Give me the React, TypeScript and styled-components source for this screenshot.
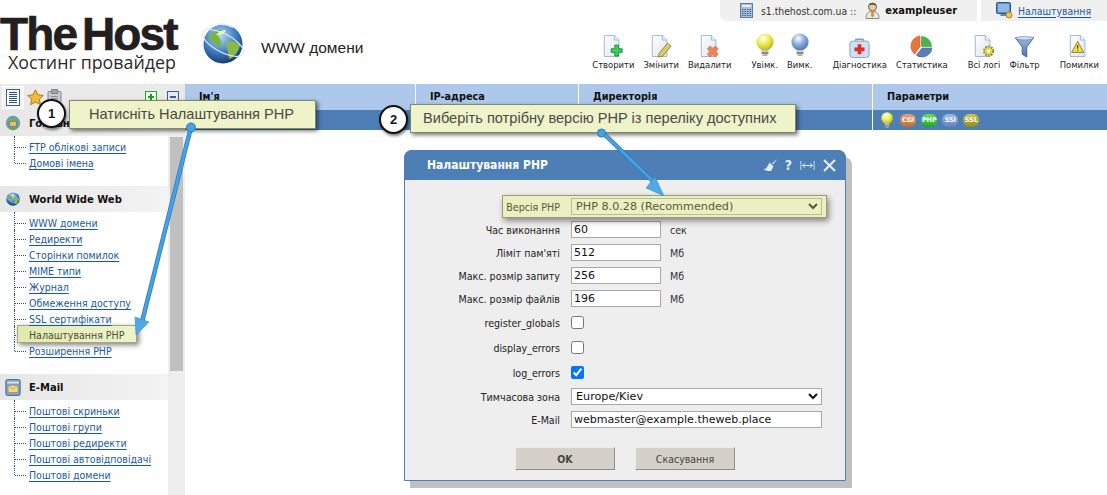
import React from "react";
import styled, { createGlobalStyle } from "styled-components";

const Global = createGlobalStyle`
  html, body { margin: 0; padding: 0; background: #fff; }
  body { font-family: "DejaVu Sans Condensed", "Noto Sans", Tahoma, sans-serif; font-size: 10.5px; color: #222; overflow: hidden; }
  * { box-sizing: border-box; }
`;

const Page = styled.div`
  position: relative;
  width: 1107px;
  height: 495px;
  overflow: hidden;
`;

const Header = styled.header`
  display: flex;
  height: 84px;
`;
const LogoBlock = styled.div`
  width: 200px;
  flex: none;
  padding-top: 11px;
`;
const LogoMain = styled.div`
  font-family: "Liberation Sans", Arial, sans-serif;
  font-weight: 700;
  font-size: 46px;
  line-height: 46px;
  letter-spacing: -1.9px;
  word-spacing: -5px;
  color: #231f20;
  -webkit-text-stroke: 0.7px #231f20;
  white-space: nowrap;
`;
const LogoSub = styled.div`
  font-family: "Open Sans", sans-serif;
  font-size: 17.8px;
  line-height: 20px;
  margin: -5px 0 0 8px;
  color: #2d2a2b;
  white-space: nowrap;
`;
const GlobeWrap = styled.div`
  width: 61px;
  flex: none;
  padding-top: 21px;
`;
const PageTitle = styled.h1`
  margin: 0;
  padding-top: 38px;
  font-family: "Liberation Sans", Arial, sans-serif;
  font-size: 15.5px;
  line-height: 20px;
  font-weight: 400;
  color: #222;
  white-space: nowrap;
`;
const HeaderRight = styled.div`
  flex: 1;
  display: flex;
  flex-direction: column;
  align-items: flex-end;
`;
const TopTabs = styled.div`
  display: flex;
  gap: 4px;
  height: 21px;
`;
const ServerTab = styled.div`
  width: 257px;
  display: flex;
  align-items: center;
  padding-left: 20px;
  background: #f0f0f0;
  border-bottom-left-radius: 6px;
  font-size: 10.3px;
  color: #333;
  white-space: nowrap;
`;
const ServerName = styled.span`
  margin-left: 8px;
`;
const UserSlot = styled.span`
  margin-left: 9px;
  display: flex;
`;
const UserName = styled.b`
  font-size: 11px;
  color: #111;
  margin-left: 5px;
`;
const SettingsTab = styled.div`
  width: 126px;
  display: flex;
  align-items: center;
  gap: 5px;
  padding-left: 15px;
  background: #f0f0f0;
`;
const TabLink = styled.a`
  color: #1a5a9c;
  text-decoration: underline;
  text-underline-offset: 2px;
  font-size: 10.4px;
`;
const Toolbar = styled.div`
  display: flex;
  gap: 20px;
  margin-top: 12px;
  padding-right: 8px;
`;
const ToolGroup = styled.div`
  display: flex;
  gap: 9px;
`;
const Tool = styled.div`
  display: flex;
  flex-direction: column;
  align-items: center;
  font-size: 9.4px;
  line-height: 12px;
  color: #222;
  white-space: nowrap;
`;
const ToolIcon = styled.div`
  height: 25px;
  margin-bottom: 1px;
  display: flex;
  align-items: flex-end;
`;

const Body = styled.div`
  display: flex;
`;
const Sidebar = styled.aside`
  width: 185px;
  flex: none;
`;
const SideTabs = styled.div`
  height: 26px;
  background: #eaeaea;
  display: flex;
  align-items: center;
  padding: 0 6px 0 2px;
`;
const ActiveTab = styled.div`
  width: 22px;
  height: 23px;
  display: flex;
  align-items: center;
  justify-content: center;
  background: #f4f4f4;
  border: 1px solid #fff;
`;
const TabIcon = styled.div`
  margin-left: 3px;
  display: flex;
`;
const Spacer = styled.div`
  flex: 1;
`;
const BoxGap = styled.span`
  width: 10px;
`;
const SideInner = styled.div`
  display: flex;
`;
const SideMenu = styled.nav`
  width: 168px;
  flex: none;
`;
const GroupHead = styled.div`
  height: 26px;
  display: flex;
  align-items: center;
  gap: 8px;
  padding-left: 5px;
  background: linear-gradient(90deg, #e6e6e6, #f3f3f3);
  font-weight: 700;
  font-size: 11.1px;
  color: #111;
`;
const LinkList = styled.ul`
  list-style: none;
  margin: 0 0 16px;
  padding: 2px 0 0 14px;
`;
const LinkItem = styled.li`
  position: relative;
  height: 16px;
  line-height: 16px;
  padding-left: 15px;
  white-space: nowrap;
  &::before {
    content: "";
    position: absolute;
    left: 0;
    top: -2px;
    bottom: 0;
    border-left: 1px dotted #33506e;
  }
  &:not(:first-child)::before { top: 0; }
  &:last-child::before { bottom: 7px; }
  &::after {
    content: "";
    position: absolute;
    left: 1px;
    top: 9px;
    width: 11px;
    border-top: 1px dotted #33506e;
  }
`;
const MenuLink = styled.a<{ $hl?: boolean }>`
  position: relative;
  z-index: 2;
  top: 1px;
  font-size: 10.5px;
  color: ${(p) => (p.$hl ? "#4d4d3c" : "#1a5a9c")};
  text-decoration: ${(p) => (p.$hl ? "none" : "underline")};
  text-underline-offset: 2px;
`;
const LinkHighlight = styled.span`
  position: absolute;
  z-index: 1;
  left: 3px;
  top: -1px;
  width: 120px;
  height: 18px;
  background: linear-gradient(90deg, #e2e9ae, #eef3cb);
  border: 1px solid #a3a87f;
  box-shadow: 2px 2px 5px rgba(0, 0, 0, 0.5);
`;
const Scroll = styled.div`
  width: 17px;
  flex: none;
  height: 385px;
  background: #eeeeee;
  padding: 27px 2px 0;
`;
const Thumb = styled.div`
  height: 234px;
  width: 13px;
  background: #c0c0c0;
`;

const Main = styled.main`
  flex: 1;
`;
const TableHead = styled.div`
  display: grid;
  grid-template-columns: 231px 163px 294px 1fr;
  height: 26px;
  background: #adc8ea;
`;
const HeadCell = styled.div`
  padding-left: 14px;
  line-height: 26px;
  font-size: 10.8px;
  font-weight: 700;
  color: #111;
  border-right: 1px solid #fff;
  &:last-child { border-right: 0; }
`;
const TableRow = styled.div`
  display: grid;
  grid-template-columns: 231px 163px 294px 1fr;
  height: 20px;
  background: #4d7eb5;
`;
const RowCell = styled.div`
  border-right: 1px solid #fff;
  display: flex;
  align-items: center;
  gap: 5px;
  padding-left: 8px;
  &:last-child { border-right: 0; }
  & > svg { margin-right: 2px; }
`;
const Badge = styled.span<{ $from: string; $to: string }>`
  flex: none;
  width: 16px;
  height: 13px;
  border-radius: 6px;
  background: linear-gradient(${(p) => p.$from}, ${(p) => p.$to});
  color: #fff;
  font-family: "DejaVu Sans", sans-serif;
  font-size: 6.5px;
  font-weight: 700;
  line-height: 13px;
  text-align: center;
  letter-spacing: -0.1px;
  overflow: hidden;
`;

const Modal = styled.section`
  position: absolute;
  z-index: 5;
  left: 404px;
  top: 150px;
  width: 442px;
  height: 331px;
  background: #eeeeee;
  border: 1px solid #4d7eb5;
  border-radius: 8px 8px 0 0;
  box-shadow: 6px 7px 0 #c0c0c0;
`;
const ModalBar = styled.div`
  height: 30px;
  margin: -1px -1px 0;
  background: #4d7eb5;
  border-radius: 8px 8px 0 0;
  display: flex;
  align-items: center;
  padding: 0 10px 0 23px;
  color: #fff;
`;
const ModalTitle = styled.div`
  flex: 1;
  font-size: 12px;
  font-weight: 700;
`;
const ModalIcons = styled.div`
  display: flex;
  align-items: center;
  gap: 8px;
`;
const HelpMark = styled.span`
  font-size: 14px;
  font-weight: 700;
  color: #e8eef6;
`;
const Form = styled.form`
  display: grid;
  grid-template-columns: 155px 261px;
  column-gap: 11px;
  row-gap: 6px;
  align-items: center;
  padding-top: 18px;
`;
const Label = styled.label`
  text-align: right;
  font-size: 10.6px;
  line-height: 14px;
  color: #222;
  white-space: nowrap;
`;
const VersionLabel = styled(Label)`
  position: relative;
  z-index: 1;
  color: #5b5a2e;
`;
const Highlight = styled.div`
  position: absolute;
  left: 97px;
  top: 44px;
  width: 325px;
  height: 23px;
  background: #eaf0c4;
  border: 1px solid #9a9f72;
  box-shadow: 2px 3px 6px rgba(0, 0, 0, 0.45);
`;
const FieldRow = styled.div`
  display: flex;
  align-items: center;
  gap: 9px;
  height: 17px;
  font-size: 10.6px;
  color: #333;
`;
const CheckRow = styled.div`
  display: flex;
  align-items: center;
  height: 19px;
`;
const TextField = styled.input<{ $w: number }>`
  width: ${(p) => p.$w}px;
  height: 17px;
  padding: 0 2px;
  border: 1px solid #a8a8a8;
  background: #fff;
  font-family: "DejaVu Sans", Verdana, sans-serif;
  font-size: 11px;
  color: #111;
  outline: 0;
`;
const Picker = styled.select<{ $tint?: boolean }>`
  position: relative;
  z-index: 1;
  width: 251px;
  height: 17px;
  padding: 0;
  border: 1px solid ${(p) => (p.$tint ? "#b9be8c" : "#a8a8a8")};
  background: ${(p) => (p.$tint ? "#eaf0c4" : "#fff")};
  color: ${(p) => (p.$tint ? "#5b5a2e" : "#111")};
  font-family: "DejaVu Sans", Verdana, sans-serif;
  font-size: 11.2px;
  border-radius: 0;
  outline: 0;
`;
const Check = styled.input`
  width: 13px;
  height: 13px;
  margin: 0;
`;
const Buttons = styled.div`
  display: flex;
  gap: 20px;
  padding: 19px 0 0 110px;
`;
const Btn = styled.button<{ $primary?: boolean }>`
  width: 100px;
  height: 23px;
  background: #d4d0c8;
  border: 1px solid;
  border-color: #ecebe6 #8f8d86 #8f8d86 #ecebe6;
  font-family: "DejaVu Sans Condensed", "Noto Sans", Tahoma, sans-serif;
  font-size: 10.5px;
  font-weight: ${(p) => (p.$primary ? 700 : 400)};
  color: #444;
  padding: 0;
`;

const Callout = styled.div<{ $x: number; $y: number; $w: number; $pad: number }>`
  position: absolute;
  z-index: 8;
  left: ${(p) => p.$x}px;
  top: ${(p) => p.$y}px;
  width: ${(p) => p.$w}px;
  height: 29px;
  padding-left: ${(p) => p.$pad}px;
  background: #eef3c9;
  border: 1px solid #85896c;
  box-shadow: 2px 2px 4px rgba(0, 0, 0, 0.55);
  font-family: "Liberation Sans", Arial, sans-serif;
  font-size: 14.6px;
  line-height: 27px;
  color: #4a4a48;
  white-space: nowrap;
`;
const Step = styled.div<{ $x: number; $y: number }>`
  position: absolute;
  z-index: 9;
  left: ${(p) => p.$x}px;
  top: ${(p) => p.$y}px;
  width: 29px;
  height: 29px;
  border-radius: 50%;
  background: #fff;
  border: 2px solid #111;
  box-shadow: 1px 2px 3px rgba(0, 0, 0, 0.5);
  font-family: "Liberation Sans", Arial, sans-serif;
  font-size: 13px;
  font-weight: 700;
  line-height: 25px;
  text-align: center;
  color: #111;
`;
const ArrowLayer = styled.svg`
  position: absolute;
  z-index: 10;
  left: 0;
  top: 0;
  pointer-events: none;
`;

const Doc = ({ children }: { children?: React.ReactNode }) => (
  <svg width="22" height="24" viewBox="0 0 24 26">
    <defs>
      <linearGradient id="docg" x1="0" y1="0" x2="1" y2="1">
        <stop offset="0" stopColor="#ffffff" />
        <stop offset="1" stopColor="#dbe5f2" />
      </linearGradient>
    </defs>
    <path d="M2.5 1.5h11l5 5v18h-16z" fill="url(#docg)" stroke="#9ab2d2" />
    <path d="M13.5 1.5v5h5" fill="#eef3fa" stroke="#9ab2d2" />
    {children}
  </svg>
);

const Bulb = ({ c1, c2, size = 25 }: { c1: string; c2: string; size?: number }) => (
  <svg width={size * 0.72} height={size} viewBox="0 0 18 25">
    <defs>
      <radialGradient id={`b${c2.slice(1)}`} cx="0.4" cy="0.3" r="0.75">
        <stop offset="0" stopColor="#ffffff" />
        <stop offset="0.45" stopColor={c1} />
        <stop offset="1" stopColor={c2} />
      </radialGradient>
    </defs>
    <circle cx="9" cy="9" r="8.6" fill={`url(#b${c2.slice(1)})`} />
    <rect x="5.5" y="17" width="7" height="2" fill="#c9c9c0" />
    <rect x="5.5" y="19" width="7" height="2" fill="#8f8f88" />
    <rect x="6.5" y="21" width="5" height="2" fill="#b5b5ae" />
  </svg>
);

const ListIcon = () => (
  <svg width="14" height="17" viewBox="0 0 14 17">
    <rect x="0.5" y="0.5" width="13" height="16" fill="#fff" stroke="#3c5f8c" />
    {[3, 5, 7, 9, 11, 13].map((y) => (
      <path key={y} d={`M3 ${y + 0.5}h8`} stroke="#2c4f80" />
    ))}
  </svg>
);
const StarIcon = () => (
  <svg width="17" height="17" viewBox="0 0 17 17">
    <path d="M8.5 .8l2.4 5 5.4.7-4 3.8 1.1 5.4-4.9-2.7-4.9 2.7 1.1-5.4-4-3.8 5.4-.7z" fill="#f4b93a" stroke="#b57a16" />
  </svg>
);
const ClipIcon = () => (
  <svg width="15" height="17" viewBox="0 0 15 17">
    <rect x="1" y="2.5" width="13" height="14" rx="1" fill="#c9ccd0" stroke="#7f858c" />
    <rect x="4.5" y="0.5" width="6" height="4" fill="#9ea4aa" stroke="#7f858c" />
    {[7, 9, 11, 13].map((y) => (
      <path key={y} d={`M4 ${y + 0.5}h7`} stroke="#8b9097" />
    ))}
  </svg>
);
const BoxBtn = ({ plus }: { plus?: boolean }) => (
  <svg width="12" height="12" viewBox="0 0 12 12">
    <rect x="0.5" y="0.5" width="11" height="11" fill={plus ? "#f2fbf2" : "#e4ebf5"} stroke={plus ? "#2aa52a" : "#3c5f8c"} />
    <path d="M3 6h6" stroke={plus ? "#1f9a1f" : "#3c5f8c"} strokeWidth="2" />
    {plus && <path d="M6 3v6" stroke="#1f9a1f" strokeWidth="2" />}
  </svg>
);

const Globe = ({ size }: { size: number }) => (
  <svg width={size} height={size} viewBox="0 0 46 46">
    <defs>
      <radialGradient id="gl" cx="0.42" cy="0.3" r="0.75">
        <stop offset="0" stopColor="#b6dcf5" />
        <stop offset="0.55" stopColor="#3d7ec4" />
        <stop offset="1" stopColor="#16305f" />
      </radialGradient>
    </defs>
    <circle cx="23" cy="23" r="19.5" fill="url(#gl)" />
    <path d="M9 15c4-5 9-7 14-6 1 3-2 5-5 6 2 3 4 5 3 9-2 3-4 1-6-2-3-1-6-2-6-7z" fill="#7cb244" />
    <path d="M26 21c5-2 11 0 14 3-1 6-5 11-10 14-3-3-1-7-3-10-1-2-2-5-1-7z" fill="#8bb84a" />
    <ellipse cx="23" cy="22" rx="23" ry="9" transform="rotate(28 23 22)" fill="none" stroke="#dfe9f3" strokeWidth="1.2" />
    <path d="M6 8c6-5 16-7 27-2" fill="none" stroke="#eef4fa" strokeWidth="2" opacity=".8" />
    <path d="M16 14c3-4 7-5 10-5-1 3-4 6-10 5z" fill="#eefbd0" opacity=".85" />
  </svg>
);

const MiniGlobe = () => <Globe size={16} />;
const HomeIcon = () => (
  <svg width="16" height="16" viewBox="0 0 19 19">
    <circle cx="9.5" cy="9.5" r="8.5" fill="#5e9cc9" />
    <path d="M2 12c4 5 11 5 15 0-1 4-4 6-7.500 6S3 16 2 12z" fill="#6fa94a" />
    <path d="M2 8c2-5 12-6 15 0-4-2-11-2-15 0z" fill="#7fb255" />
    <rect x="5.500" y="7.500" width="8" height="6" fill="#e8c26e" stroke="#98742e" />
  </svg>
);
const MailIcon = () => (
  <svg width="16" height="17" viewBox="0 0 17 19">
    <rect x="0.500" y="0.500" width="16" height="18" rx="2" fill="#7ea2d0" stroke="#3c5f8c" />
    <rect x="2" y="3" width="13" height="2" fill="#dbe6f3" />
    <rect x="3" y="7" width="11" height="8" fill="#f0dc84" stroke="#a2933f" strokeWidth=".7" />
    <path d="M3 7l5.500 4.500L14 7" fill="none" stroke="#a2933f" strokeWidth=".8" />
  </svg>
);
const CalcIcon = () => (
  <svg width="13" height="15" viewBox="0 0 13 15">
    <rect x="0.500" y="0.500" width="12" height="14" fill="#a8bfdc" stroke="#5c7aa3" />
    <rect x="2" y="2" width="9" height="2" fill="#eaf0f8" />
    {[6, 8, 10, 12].map((y) => (
      <path key={y} d={`M2 ${y + 0.5}h1.500M4.500 ${y + 0.5}h1.500M7 ${y + 0.5}h1.500M9.500 ${y + 0.5}h1.500`} stroke="#3f5f8a" />
    ))}
  </svg>
);
const UserIcon = () => (
  <svg width="15" height="17" viewBox="0 0 15 17">
    <circle cx="7.500" cy="5" r="4" fill="#f0c89a" stroke="#71685c" />
    <path d="M3.500 3.500c1-3 7-3 8 0-2-1-6-1-8 0z" fill="#4d4a46" />
    <path d="M1 16.500c0-5 2-7 6.500-7s6.500 2 6.500 7z" fill="#e8e8e2" stroke="#8a8a82" />
    <path d="M6.500 9.500h2l.7 4-1.700 2-1.700-2z" fill="#d9952f" />
  </svg>
);
const MonitorIcon = () => (
  <svg width="17" height="17" viewBox="0 0 17 17">
    <rect x="0.500" y="0.500" width="14" height="11" rx="1" fill="#5b8cc4" stroke="#2f5686" />
    <rect x="2" y="2" width="11" height="8" fill="#8fb8e4" />
    <path d="M5 12h5v2H4z" fill="#6d83a0" />
    <circle cx="13" cy="13" r="3" fill="#eec643" stroke="#a88a22" />
  </svg>
);

const Gear = () => (
  <g>
    <circle cx="17" cy="18.500" r="5" fill="#e6d44c" stroke="#9a8f2a" strokeWidth="2.200" strokeDasharray="2 1.200" />
    <circle cx="17" cy="18.500" r="1.800" fill="#fff" />
  </g>
);

const tools = [
  [
    { label: "Створити", icon: <Doc><path d="M14 12h4v4h4v4h-4v4h-4v-4h-4v-4h4z" fill="#38d158" stroke="#1f8d34" /></Doc> },
    { label: "Змінити", icon: <Doc><path d="M10 21l9-11 4 3-9 11-5 1z" fill="#d9cc66" stroke="#8f8230" /></Doc> },
    { label: "Видалити", icon: <Doc><path d="M12 13l3 2.500 3-2.500 3 3-2.500 3 2.500 3-3 3-3-2.500-3 2.500-3-3 2.500-3-2.500-3z" fill="#ee8458" stroke="#c9653a" strokeWidth=".6" /></Doc> },
  ],
  [
    { label: "Увімк.", icon: <Bulb c1="#eeee55" c2="#b6ad1c" /> },
    { label: "Вимк.", icon: <Bulb c1="#8fb0e0" c2="#4a6ea8" /> },
  ],
  [
    {
      label: "Діагностика",
      icon: (
        <svg width="21" height="21" viewBox="0 0 23 23">
          <path d="M7.500 5V2.500h8V5" fill="none" stroke="#8aa0c0" strokeWidth="1.500" />
          <rect x="1" y="4.500" width="21" height="18" rx="3" fill="#cfe0f4" stroke="#7c9cc6" />
          <path d="M9.500 8h4v3.500H17v4h-3.500V19h-4v-3.500H6v-4h3.500z" fill="#e52b22" />
        </svg>
      ),
    },
    {
      label: "Статистика",
      icon: (
        <svg width="23" height="23" viewBox="0 0 24 24">
          <path d="M12 1.500A10.500 10.500 0 0 1 22.500 12H12z" fill="#49b548" stroke="#2e8a30" strokeWidth=".5" />
          <path d="M10.500 1C4 2 .5 7 1 13c.3 3 2 5.500 4 7l5.500-8z" fill="#e9743d" stroke="#b14f22" strokeWidth=".5" />
          <path d="M12.500 13.500H23c-.5 5.500-5 9.500-10.500 9.500-2.500 0-4.500-.8-6-2z" fill="#5f7fb4" stroke="#3d5a8c" strokeWidth=".5" />
        </svg>
      ),
    },
  ],
  [
    { label: "Всі логі", icon: <Doc><Gear /></Doc> },
    {
      label: "Фільтр",
      icon: (
        <svg width="21" height="22" viewBox="0 0 22 24">
          <defs>
            <linearGradient id="fn" x1="0" x2="0" y1="0" y2="1">
              <stop offset="0" stopColor="#9db9dc" />
              <stop offset="1" stopColor="#4e76a8" />
            </linearGradient>
          </defs>
          <path d="M1 2h20l-7.500 10v11l-5-3v-8z" fill="url(#fn)" stroke="#3e6596" />
          <ellipse cx="11" cy="2.500" rx="10" ry="1.800" fill="#d5e2f2" stroke="#3e6596" strokeWidth=".6" />
        </svg>
      ),
    },
  ],
  [
    { label: "Помилки", icon: <Doc><path d="M10.500 8l6.500 12H4z" fill="#f2df44" stroke="#8d7d1c" /><path d="M10.500 12v4M10.500 17.300v1.200" stroke="#333" strokeWidth="1.200" /></Doc> },
  ],
];

const Group = ({ icon, title, links, hl }: { icon: React.ReactNode; title: React.ReactNode; links: string[]; hl?: string }) => (
  <>
    <GroupHead>
      {icon}
      <span>{title}</span>
    </GroupHead>
    <LinkList>
      {links.map((l) => (
        <LinkItem key={l}>
          {l === hl && <LinkHighlight />}
          <MenuLink $hl={l === hl}>{l}</MenuLink>
        </LinkItem>
      ))}
    </LinkList>
  </>
);

const numberRows = [
  { label: "Час виконання", value: "60", unit: "сек" },
  { label: "Ліміт пам'яті", value: "512", unit: "Мб" },
  { label: "Макс. розмір запиту", value: "256", unit: "Мб" },
  { label: "Макс. розмір файлів", value: "196", unit: "Мб" },
];
const checks = [
  { label: "register_globals", on: false },
  { label: "display_errors", on: false },
  { label: "log_errors", on: true },
];

export default function App() {
  return (
    <Page>
      <Global />
      <Header>
        <LogoBlock>
          <LogoMain>The Host</LogoMain>
          <LogoSub>Хостинг провайдер</LogoSub>
        </LogoBlock>
        <GlobeWrap>
          <Globe size={46} />
        </GlobeWrap>
        <PageTitle>WWW домени</PageTitle>
        <HeaderRight>
          <TopTabs>
            <ServerTab>
              <CalcIcon />
              <ServerName>s1.thehost.com.ua ::</ServerName>
              <UserSlot><UserIcon /></UserSlot>
              <UserName>exampleuser</UserName>
            </ServerTab>
            <SettingsTab>
              <MonitorIcon />
              <TabLink>Налаштування</TabLink>
            </SettingsTab>
          </TopTabs>
          <Toolbar>
            {tools.map((g, i) => (
              <ToolGroup key={i}>
                {g.map((t) => (
                  <Tool key={t.label}>
                    <ToolIcon>{t.icon}</ToolIcon>
                    {t.label}
                  </Tool>
                ))}
              </ToolGroup>
            ))}
          </Toolbar>
        </HeaderRight>
      </Header>
      <Body>
        <Sidebar>
          <SideTabs>
            <ActiveTab><ListIcon /></ActiveTab>
            <TabIcon><StarIcon /></TabIcon>
            <TabIcon><ClipIcon /></TabIcon>
            <Spacer />
            <BoxBtn plus />
            <BoxGap />
            <BoxBtn />
          </SideTabs>
          <SideInner>
            <SideMenu>
              <Group icon={<HomeIcon />} title="Головна" links={["FTP облікові записи", "Домові імена"]} />
              <Group
                icon={<MiniGlobe />}
                title="World Wide Web"
                hl="Налаштування PHP"
                links={["WWW домени", "Редиректи", "Сторінки помилок", "MIME типи", "Журнал", "Обмеження доступу", "SSL сертифікати", "Налаштування PHP", "Розширення PHP"]}
              />
              <Group
                icon={<MailIcon />}
                title="E-Mail"
                links={["Поштові скриньки", "Поштові групи", "Поштові редиректи", "Поштові автовідповідачі", "Поштові домени"]}
              />
            </SideMenu>
            <Scroll>
              <Thumb />
            </Scroll>
          </SideInner>
        </Sidebar>
        <Main>
          <TableHead>
            <HeadCell>Ім'я</HeadCell>
            <HeadCell>IP-адреса</HeadCell>
            <HeadCell>Директорія</HeadCell>
            <HeadCell>Параметри</HeadCell>
          </TableHead>
          <TableRow>
            <RowCell />
            <RowCell />
            <RowCell />
            <RowCell>
              <Bulb c1="#f2f24c" c2="#b9b01c" size={17} />
              <Badge $from="#e6a06e" $to="#b96e3a">CGI</Badge>
              <Badge $from="#62e060" $to="#22a528">PHP</Badge>
              <Badge $from="#9db6e4" $to="#6280bc">SSI</Badge>
              <Badge $from="#cfc84a" $to="#8f8a1e">SSL</Badge>
            </RowCell>
          </TableRow>
        </Main>
      </Body>

      <Modal>
        <ModalBar>
          <ModalTitle>Налаштування PHP</ModalTitle>
          <ModalIcons>
            <svg width="14" height="13" viewBox="0 0 14 13">
              <path d="M13.500 .5L9 4.500l1 1 3.500-4.500z" fill="#e3ebf5" />
              <path d="M6.500 3.500L10.500 7.500 8 12H4.500L0.500 10.500C3 10 5 7 6.500 3.500z" fill="#e3ebf5" />
            </svg>
            <HelpMark>?</HelpMark>
            <svg width="15" height="13" viewBox="0 0 17 13">
              <path d="M1 1.500v10M16 1.500v10" stroke="#c8d6e8" strokeWidth="1.200" fill="none" />
              <path d="M3 6.500h11M5.500 4l-2.500 2.500L5.500 9M11.500 4l2.500 2.500L11.500 9" stroke="#e8eef6" strokeWidth="1.100" fill="none" />
            </svg>
            <svg width="13" height="13" viewBox="0 0 13 13">
              <path d="M1 1l11 11M12 1L1 12" stroke="#e6edf6" strokeWidth="2" />
            </svg>
          </ModalIcons>
        </ModalBar>
        <Highlight />
        <Form>
          <VersionLabel>Версія PHP</VersionLabel>
          <FieldRow>
            <Picker $tint defaultValue="8">
              <option value="8">PHP 8.0.28 (Recommended)</option>
            </Picker>
          </FieldRow>
          {numberRows.map((r) => (
            <React.Fragment key={r.label}>
              <Label>{r.label}</Label>
              <FieldRow>
                <TextField $w={90} defaultValue={r.value} />
                {r.unit}
              </FieldRow>
            </React.Fragment>
          ))}
          {checks.map((c) => (
            <React.Fragment key={c.label}>
              <Label>{c.label}</Label>
              <CheckRow>
                <Check type="checkbox" defaultChecked={c.on} />
              </CheckRow>
            </React.Fragment>
          ))}
          <Label>Тимчасова зона</Label>
          <FieldRow>
            <Picker defaultValue="k">
              <option value="k">Europe/Kiev</option>
            </Picker>
          </FieldRow>
          <Label>E-Mail</Label>
          <FieldRow>
            <TextField $w={251} defaultValue="webmaster@example.theweb.place" />
          </FieldRow>
        </Form>
        <Buttons>
          <Btn $primary type="button">OK</Btn>
          <Btn type="button">Скасування</Btn>
        </Buttons>
      </Modal>

      <Callout $x={69} $y={100} $w={247} $pad={19}>Натисніть Налаштування PHP</Callout>
      <Step $x={37} $y={99}>1</Step>
      <Callout $x={410} $y={104} $w={386} $pad={12}>Виберіть потрібну версію PHP із переліку доступних</Callout>
      <Step $x={379} $y={105}>2</Step>

      <ArrowLayer width="1107" height="495" viewBox="0 0 1107 495">
        <path d="M191 127L142 322" stroke="#2f78b4" strokeWidth="4.500" fill="none" />
        <path d="M191 127L142 322" stroke="#43a3e6" strokeWidth="3" fill="none" />
        <circle cx="191" cy="127.500" r="4.500" fill="#43a3e6" stroke="#2f78b4" />
        <path d="M135 317L149 322L136 335z" fill="#4ea9e4" stroke="#3c8cc8" strokeWidth=".6" />
        <path d="M602 132L657 185" stroke="#2f78b4" strokeWidth="4.500" fill="none" />
        <path d="M602 132L657 185" stroke="#43a3e6" strokeWidth="3" fill="none" />
        <circle cx="601.500" cy="133" r="4" fill="#43a3e6" stroke="#2f78b4" />
        <path d="M646 188L655 177L664 196z" fill="#4ea9e4" stroke="#3c8cc8" strokeWidth=".6" />
      </ArrowLayer>
    </Page>
  );
}
